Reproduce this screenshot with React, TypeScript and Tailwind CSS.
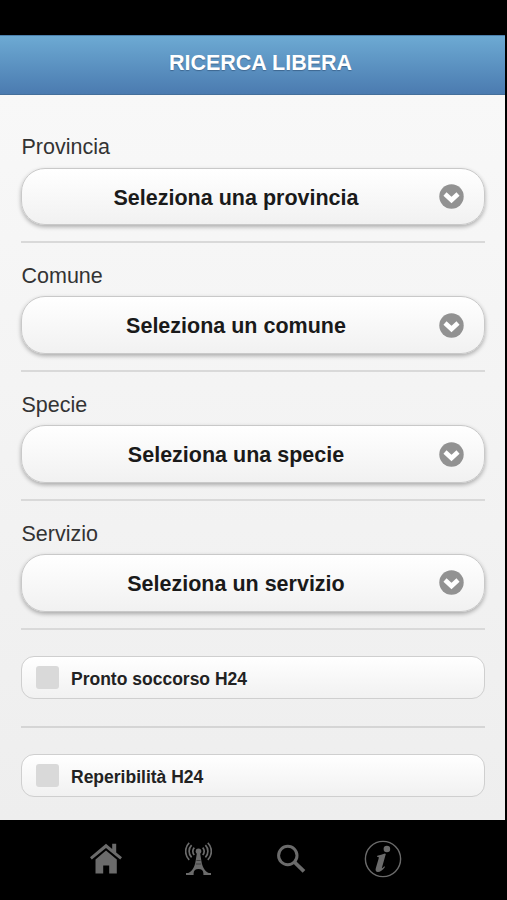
const selects = [
  { label: "Provincia", text: "Seleziona una provincia" },
  { label: "Comune", text: "Seleziona un comune" },
  { label: "Specie", text: "Seleziona una specie" },
  { label: "Servizio", text: "Seleziona un servizio" },
];

const ArrowIcon = () => (
  <svg className="h-[25px] w-[25px] shrink-0" viewBox="0 0 25 25" fill="none">
    <circle cx="12.5" cy="12.5" r="12.2" fill="#929292" />
    <path d="M6 10 L12.5 16 L19 10" stroke="#fff" strokeWidth="4.6" />
  </svg>
);

const HomeIcon = () => (
  <svg className="h-[32px] w-[34px]" viewBox="0 0 34 32" fill="#6b6b6b">
    <path d="M17 7.4 L27.8 16.4 V30.5 H20.2 V22.5 H14.2 V30.5 H6.5 V16.4 Z" />
    <path d="M17 .8 L23.2 6.1 V.8 H27.2 V9.5 L33 14.3 L31.2 16.6 L17 4.9 L2.8 16.6 L1 14.3 Z" />
  </svg>
);

const AntennaIcon = () => (
  <svg className="h-[34px] w-[27px]" viewBox="0 0 27 34" fill="none" stroke="#6b6b6b">
    <path d="M9.3 5.6 a5.3 5.3 0 0 0 0 7.4 M17.7 5.6 a5.3 5.3 0 0 1 0 7.4" strokeWidth="1.7" />
    <path d="M6.6 3.2 a8.7 8.7 0 0 0 0 12.2 M20.4 3.2 a8.7 8.7 0 0 1 0 12.2" strokeWidth="1.7" />
    <path d="M4.2 .8 a12 12 0 0 0 0 17 M22.8 .8 a12 12 0 0 1 0 17" strokeWidth="1.7" />
    <circle cx="13.5" cy="9.3" r="2.8" fill="#6b6b6b" stroke="none" />
    <path
      d="M12.1 10 H14.9 L16.4 19 C17.4 25 19.6 29 23.8 31 H26 V33 H18.4 V31.4 C18.4 28.4 16.4 27 13.5 27 C10.6 27 8.6 28.4 8.6 31.4 V33 H1 V31 H3.2 C7.4 29 9.6 25 10.6 19 Z"
      fill="#6b6b6b"
      stroke="none"
    />
    <path d="M11.4 18.5 H15.6 M10.8 22 H16.2" stroke="#222" strokeWidth=".6" />
  </svg>
);

const SearchIcon = () => (
  <svg className="h-[30px] w-[30px]" viewBox="0 0 30 30" fill="none" stroke="#6b6b6b">
    <circle cx="11.8" cy="11.5" r="9.2" strokeWidth="3" />
    <path d="M18.3 18 L28 27.4" strokeWidth="3.8" />
  </svg>
);

const InfoIcon = () => (
  <svg className="h-[38px] w-[38px]" viewBox="0 0 38 38" fill="none">
    <circle cx="19" cy="19" r="17.6" stroke="#6b6b6b" strokeWidth="1.4" />
    <circle cx="22.9" cy="9" r="3.3" fill="#6b6b6b" />
    <path
      d="M13.3 15.8 C16 15.2 18.3 14.6 21 13.6 L21.8 14.1 L18 27.4 C17.6 28.9 18.3 28.5 20.4 26.3 L21 27 C18.6 30.5 16 31.9 13.9 31.9 C11.8 31.9 11.2 30.2 11.8 28.2 L14.6 18.7 C15 17.3 14.8 17 13.1 17.1 Z"
      fill="#6b6b6b"
    />
  </svg>
);

const Checkbox = ({ label }: { label: string }) => (
  <label className="flex h-[43px] items-center rounded-[13px] border-[1.5px] border-[#cfcfcf] bg-gradient-to-b from-white to-[#f1f1f1] pl-[13.5px]">
    <span className="h-[23px] w-[23px] rounded-[3px] bg-[#d9d9d9]" />
    <span className="ml-[12.5px] pt-[5px] text-[17.5px] leading-none font-bold text-[#222]">{label}</span>
  </label>
);

const App = () => {
  return (
    <div className="flex h-[900px] w-[507px] flex-col bg-black pt-[35px] font-['Liberation_Sans',Arial,sans-serif]">
      <header className="flex h-[60px] w-[505px] items-center justify-center border-t border-b border-t-[#4b7fab] border-b-[#456f9a] bg-gradient-to-b from-[#6daad3] to-[#4b7bb0] pb-[2px] pl-[16px]">
        <h1 className="text-[21.5px] leading-none font-bold text-white [text-shadow:0_1px_1px_#3e6790]">
          RICERCA LIBERA
        </h1>
      </header>

      <main className="h-[725px] w-[505px] bg-gradient-to-b from-[#f8f8f8] to-[#eeeeee] pr-[20px] pl-[21px]">
        <div className="pt-[19px]">
          {selects.map((item) => (
            <div key={item.label} className="h-[128.9px] border-b-2 border-[#d9d9d9] pt-[20px]">
              <div className="h-[33.5px] pt-[2px] pl-[.5px] text-[21.5px] leading-[22px] text-[#333]">{item.label}</div>
              <button className="flex h-[57.5px] w-full items-center rounded-[24px] border-[1.5px] border-[#c9c9c9] bg-gradient-to-b from-white to-[#f1f1f1] pr-[20px] shadow-[0_2px_4px_rgba(0,0,0,0.3)]">
                <span className="flex-1 pt-[4px] pl-[11px] text-[21.5px] leading-none font-bold text-[#1a1a1a]">
                  {item.text}
                </span>
                <ArrowIcon />
              </button>
            </div>
          ))}
        </div>

        <div className="h-[98.5px] border-b-2 border-[#d5d5d5] pt-[26px]">
          <Checkbox label="Pronto soccorso H24" />
        </div>
        <div className="pt-[25.5px]">
          <Checkbox label="Reperibilità H24" />
        </div>
      </main>

      <footer className="grid h-[78px] w-[429px] grid-cols-4 place-items-center pl-[60px]">
        <HomeIcon />
        <AntennaIcon />
        <SearchIcon />
        <InfoIcon />
      </footer>
    </div>
  );
};

export default App;
